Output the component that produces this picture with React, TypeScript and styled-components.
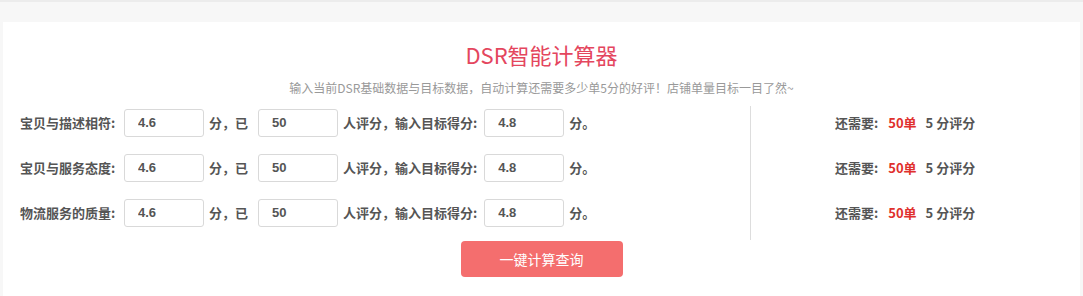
import React from 'react';
import styled, { createGlobalStyle } from 'styled-components';

const GlobalStyle = createGlobalStyle`
  html, body {
    margin: 0;
    padding: 0;
    background: #f7f7f7;
    font-family: "Noto Sans CJK SC", "Liberation Sans", sans-serif;
  }
`;

const Page = styled.div`
  border-top: 2px solid #ececec;
  padding: 20px 3px 0 3px;
`;

const Card = styled.div`
  background: #fff;
  padding: 16px 0 20px;
  min-height: 254px;
`;

const Title = styled.h1`
  margin: 0;
  text-align: center;
  font-size: 22px;
  line-height: 32px;
  font-weight: 400;
  color: #e4465e;
`;

const Subtitle = styled.p`
  margin: 8px 0 0;
  text-align: center;
  font-size: 12px;
  line-height: 20px;
  color: #999;
`;

const Body = styled.div`
  display: flex;
  margin-top: 2px;
`;

const LeftCol = styled.div`
  width: 747px;
  padding-left: 17px;
  box-sizing: border-box;
`;

const RightCol = styled.div`
  flex: 1;
  border-left: 1px solid #ddd;
  margin: 6px 0 0;
  padding-left: 84px;
  height: 134px;
  box-sizing: border-box;
  display: flex;
  flex-direction: column;
`;

const Row = styled.div`
  display: flex;
  align-items: center;
  height: 45px;
  font-size: 13px;
  font-weight: 700;
  color: #555;
`;

const ResultRow = styled(Row)`
  &:first-child {
    margin-top: -6px;
  }
`;

const Label = styled.span`
  width: 104px;
  flex-shrink: 0;
`;

const Text = styled.span<{ $gap?: number }>`
  margin: 0 ${({ $gap = 11 }) => $gap}px 0 5px;
  white-space: pre;
`;

const Input = styled.input`
  width: 80px;
  height: 28px;
  box-sizing: border-box;
  border: 1px solid #d9d9d9;
  border-radius: 3px;
  padding: 0 0 0 13px;
  font-family: "Liberation Sans", sans-serif;
  font-size: 13px;
  font-weight: 700;
  color: #555;
  outline: none;
`;

const Red = styled.span`
  color: #e0302d;
  margin: 0 9px 0 10px;
`;

const Footer = styled.div`
  display: flex;
  justify-content: center;
  margin-top: 1px;
`;

const Button = styled.button`
  width: 162px;
  height: 36px;
  border: none;
  border-radius: 4px;
  background: #f46e6e;
  color: #fff;
  font-family: "Noto Sans CJK SC", sans-serif;
  font-size: 14px;
  cursor: pointer;
`;

const rows = [
  { label: '宝贝与描述相符:', score: '4.6', count: '50', target: '4.8' },
  { label: '宝贝与服务态度:', score: '4.6', count: '50', target: '4.8' },
  { label: '物流服务的质量:', score: '4.6', count: '50', target: '4.8' },
];

export default function App() {
  return (
    <Page>
      <GlobalStyle />
      <Card>
        <Title>DSR智能计算器</Title>
        <Subtitle>输入当前DSR基础数据与目标数据，自动计算还需要多少单5分的好评！店铺单量目标一目了然~</Subtitle>
        <Body>
          <LeftCol>
            {rows.map((r) => (
              <Row key={r.label}>
                <Label>{r.label}</Label>
                <Input defaultValue={r.score} />
                <Text $gap={10}>分，已</Text>
                <Input defaultValue={r.count} />
                <Text $gap={7}>人评分，输入目标得分:</Text>
                <Input defaultValue={r.target} />
                <Text>分。</Text>
              </Row>
            ))}
          </LeftCol>
          <RightCol>
            {rows.map((r) => (
              <ResultRow key={r.label}>
                还需要:<Red>50单</Red>5 分评分
              </ResultRow>
            ))}
          </RightCol>
        </Body>
        <Footer>
          <Button>一键计算查询</Button>
        </Footer>
      </Card>
    </Page>
  );
}
